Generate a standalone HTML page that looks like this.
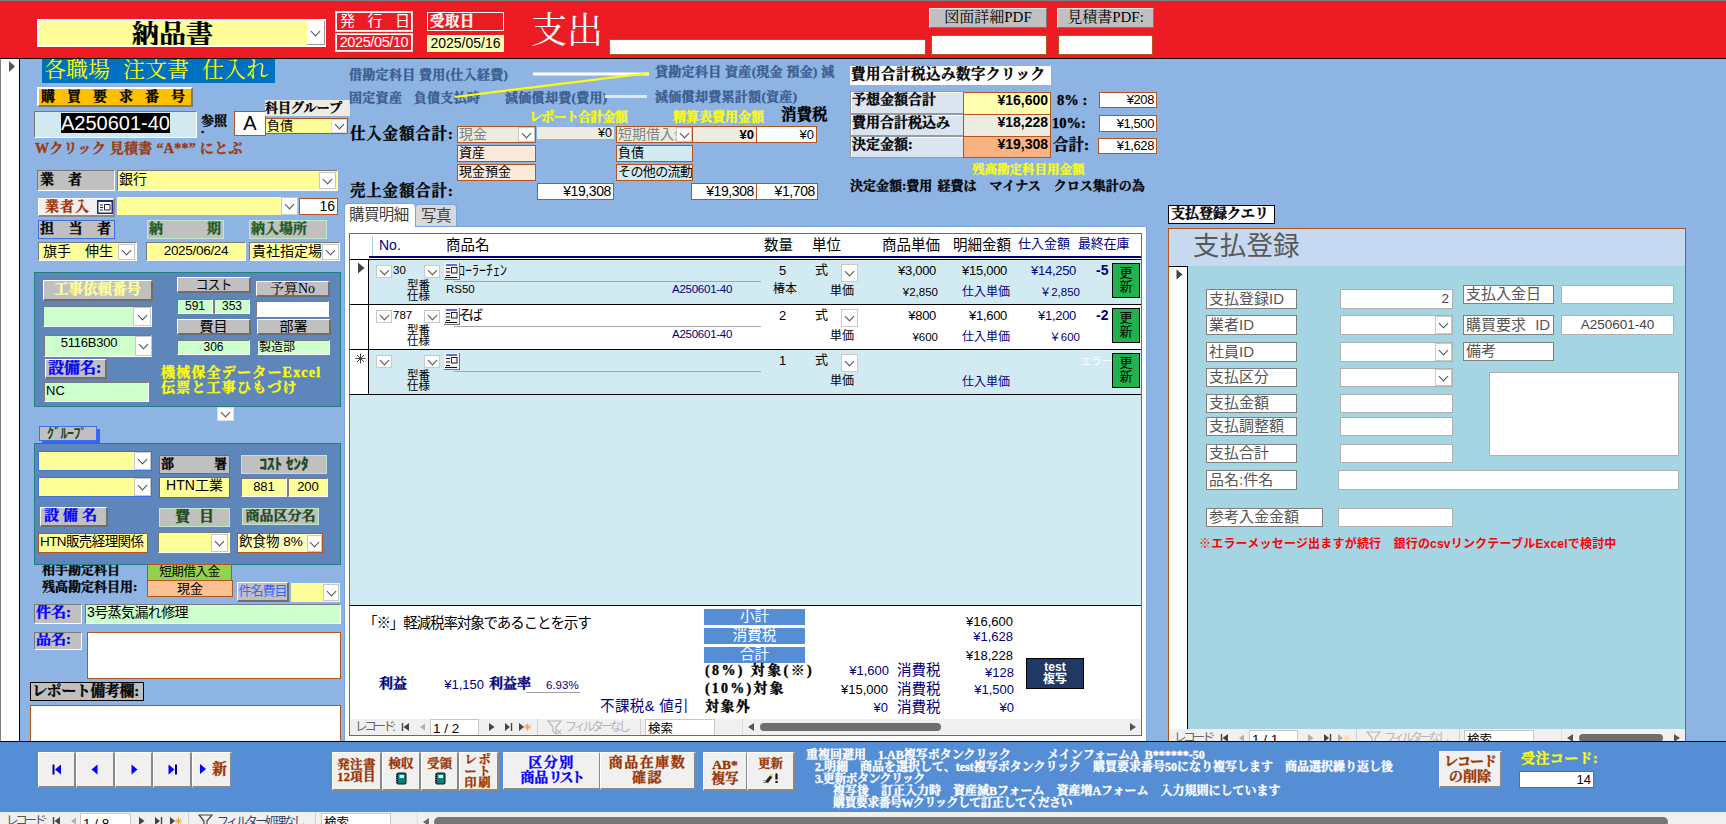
<!DOCTYPE html>
<html lang="ja">
<head>
<meta charset="utf-8">
<title>納品書 支出</title>
<style>
*{margin:0;padding:0;box-sizing:border-box}
html,body{width:1726px;height:824px;overflow:hidden;background:#8eb4e3}
body{position:relative;font-family:"Liberation Sans","Noto Sans CJK JP",sans-serif;font-size:14px;color:#000}
.a{position:absolute;white-space:nowrap;overflow:hidden}
.v{position:absolute;white-space:nowrap;overflow:visible}
.g{font-family:"Liberation Sans","Noto Sans CJK JP",sans-serif}
.m{font-family:"Liberation Serif","Noto Serif CJK SC",serif;font-weight:bold;-webkit-text-stroke:.35px}
.ms{font-family:"Liberation Serif","Noto Serif CJK SC",serif}
.r{text-align:right}
.c{text-align:center}
.b{font-weight:bold}
.br{border:1px solid #b4551e}
.sunk{border:1px solid #9a9a9a;box-shadow:inset 1px 1px 0 #fff}
.sunk2{border-top:1px solid #7a7a7a;border-left:1px solid #7a7a7a;border-bottom:1px solid #fff;border-right:1px solid #fff}
.rais{border-top:1px solid #fff;border-left:1px solid #fff;border-bottom:2px solid #6e6e6e;border-right:2px solid #6e6e6e}
.btn{background:#f0f0f0;border-top:1px solid #fff;border-left:1px solid #fff;border-bottom:2px solid #8a8a8a;border-right:2px solid #8a8a8a}
.gy{background:#c0c0c0}
.ye{background:#ffff99}
.gr{background:#ccffcc}
.wh{background:#fff}
.dd{position:absolute;background:#fff;border:1px solid #c8c8c8}
.dd:after{content:"";position:absolute;left:50%;top:50%;width:6px;height:6px;margin-left:-3.5px;margin-top:-5px;border-right:1px solid #505050;border-bottom:1px solid #505050;transform:rotate(45deg)}
.navy{color:#00007f}
.lb{color:#3a5c90}
</style>
</head>
<body>
<!-- backgrounds -->
<div class="a" style="left:0;top:0;width:1726px;height:59px;background:#ed1c24;border-top:1px solid #7f7f7f;border-bottom:1px solid #000"></div>
<div class="a" style="left:0;top:59px;width:20px;height:682px;background:#fff;border-right:1px solid #000;border-left:1px solid #808080"></div>
<svg class="a" style="left:8px;top:60px" width="8" height="13"><path d="M1 1 L7 6.5 L1 12 Z" fill="#555"/></svg>

<!-- HEADER -->
<div id="hdr">
<div class="a ye m c" style="left:37px;top:19px;width:289px;height:28px;border:2px solid #fff;font-size:27px;line-height:29px;padding-right:18px">納品書</div>
<div class="dd" style="left:307px;top:21px;width:18px;height:24px;border:0;border-right:1px solid #9a9a9a;border-bottom:1px solid #9a9a9a"></div>
<div class="a g" style="left:335px;top:11px;width:78px;height:21px;border:1px solid #cde4e4;box-shadow:inset 0 0 0 1px #fff;color:#fff;font-size:15px;line-height:18px;padding-left:4px;letter-spacing:12.500px">発行日</div>
<div class="a g c" style="left:335px;top:33px;width:78px;height:19px;border:1px solid #cde4e4;box-shadow:inset 0 0 0 1px #fff;color:#fff;font-size:14.500px;line-height:16px;letter-spacing:-.4px">2025/05/10</div>
<div class="a m" style="left:427px;top:12px;width:77px;height:19px;border:1px solid #fff;color:#fff;font-size:14.500px;line-height:16px;padding-left:2px;letter-spacing:.4px">受取日</div>
<div class="a g c" style="left:427px;top:35px;width:77px;height:17px;background:#ffffb4;border:1px solid #fff;font-size:14px;line-height:15px">2025/05/16</div>
<div class="v ms" style="left:531px;top:8px;font-size:36px;line-height:46px;color:#fff;font-weight:normal">支出</div>
<div class="a wh" style="left:609px;top:39px;width:317px;height:16px;border:1px solid #b4551e"></div>
<div class="a gy ms c" style="left:929px;top:8px;width:118px;height:20px;border:1px solid #e8e8e8;border-bottom-color:#777;border-right-color:#777;font-size:15px;line-height:17px;font-weight:normal">図面詳細PDF</div>
<div class="a wh" style="left:931px;top:35px;width:116px;height:20px;border:1px solid #b4551e"></div>
<div class="a gy ms c" style="left:1057px;top:8px;width:97px;height:20px;border:1px solid #e8e8e8;border-bottom-color:#777;border-right-color:#777;font-size:15px;line-height:17px;font-weight:normal">見積書PDF:</div>
<div class="a wh" style="left:1058px;top:35px;width:95px;height:20px;border:1px solid #b4551e"></div>
</div>

<!--LEFT-->
<div id="left">
<div class="a ms" style="left:42px;top:59px;width:233px;height:24px;background:#0070c0;color:#ffff00;font-size:22px;line-height:22px;padding-left:2px;font-weight:normal;word-spacing:7.5px">各職場 注文書 仕入れ</div>
<div class="a m" style="left:37px;top:87px;width:156px;height:20px;background:#ffc000;border-top:2px solid #fff;border-left:2px solid #fff;border-bottom:2px solid #7a7a7a;border-right:2px solid #7a7a7a;font-size:14px;line-height:15px;letter-spacing:12px;padding-left:2px">購買要求番号</div>
<div class="a sunk2" style="left:34px;top:111px;width:163px;height:27px;background:#d2e9f0"></div>
<div class="a g" style="left:61px;top:113px;width:109px;height:20px;background:#000;color:#fff;font-size:20px;line-height:21px;letter-spacing:0">A250601-40</div>
<div class="v m" style="left:201px;top:112px;font-size:13px;line-height:17px">参照<br><span style="position:relative;top:-9px">.</span></div>
<div class="a wh br g c" style="left:234px;top:111px;width:32px;height:25px;font-size:20px;line-height:22px">A</div>
<div class="a m" style="left:265px;top:100px;width:85px;height:16px;background:#eeece1;font-size:13px;line-height:15px">科目グループ</div>
<div class="a ye br g" style="left:265px;top:118px;width:83px;height:16px;font-size:13px;line-height:14px;padding-left:1px">負債</div>
<div class="dd" style="left:331px;top:119px;width:16px;height:14px;border-color:#ddd"></div>
<div class="v m" style="left:35px;top:140px;font-size:14px;line-height:18px;color:#9c3a10;letter-spacing:.3px">Wクリック 見積書 “A**” にとぶ</div>

<div class="a gy sunk2 m" style="left:37px;top:170px;width:78px;height:21px;font-size:14px;line-height:17px;padding-left:2px;letter-spacing:14px">業者</div>
<div class="a ye sunk2 g" style="left:117px;top:170px;width:221px;height:21px;font-size:14px;line-height:17px;padding-left:1px">銀行</div>
<div class="dd" style="left:319px;top:172px;width:17px;height:17px"></div>
<div class="a btn m" style="left:38px;top:198px;width:77px;height:19px;font-size:14px;line-height:16px;color:#a0300a;padding-left:6px;letter-spacing:1px">業者入</div>
<svg class="a" style="left:97px;top:200px" width="16" height="14"><rect x="0" y="0" width="16" height="14" fill="#1f2f6f"/><rect x="1.5" y="2" width="13" height="10.5" fill="#fff"/><path d="M3 5h3M3 7.5h3M3 10h3M7.5 4.5h5.5v5.5h-5.5z" stroke="#222" fill="none" stroke-width="1"/></svg>
<div class="a ye" style="left:117px;top:197px;width:181px;height:18px"></div>
<div class="dd" style="left:281px;top:197px;width:17px;height:18px"></div>
<div class="a wh br g r" style="left:299px;top:198px;width:39px;height:17px;font-size:14px;line-height:15px;padding-right:2px">16</div>
<div class="a gy m" style="left:38px;top:220px;width:77px;height:19px;border:1px solid #3f6fe0;font-size:14px;line-height:16px;padding-left:1px;letter-spacing:14.5px">担当者</div>
<div class="a gy m" style="left:147px;top:220px;width:77px;height:19px;border:1px solid #bfe8c8;font-size:14px;line-height:16px;padding-left:1px;color:#1a5a1a;letter-spacing:44px">納期</div>
<div class="a gy m" style="left:249px;top:220px;width:78px;height:19px;border:1px solid #bfe8c8;font-size:14px;line-height:16px;padding-left:1px;color:#1a5a1a">納入場所</div>
<div class="a ye sunk2 g" style="left:38px;top:242px;width:99px;height:19px;font-size:14px;line-height:16px;padding-left:4px">旗手　伸生</div>
<div class="dd" style="left:118px;top:244px;width:17px;height:16px"></div>
<div class="a ye sunk2 g c" style="left:146px;top:242px;width:100px;height:19px;font-size:13.5px;line-height:16px;letter-spacing:-.3px">2025/06/24</div>
<div class="a ye sunk2 g" style="left:249px;top:242px;width:91px;height:19px;font-size:14px;line-height:16px;padding-left:2px">貴社指定場所</div>
<div class="dd" style="left:322px;top:244px;width:17px;height:16px"></div>

<!-- panel 1 -->
<div class="a" style="left:34px;top:272px;width:307px;height:135px;background:#5f86ba;border:1px solid #1f8080"></div>
<div class="a gy rais m c" style="left:43px;top:280px;width:110px;height:21px;font-size:14.5px;line-height:16px;color:#ffff99;letter-spacing:0">工事依頼番号</div>
<div class="a gr sunk2" style="left:43px;top:306px;width:109px;height:21px"></div>
<div class="dd" style="left:133px;top:307px;width:18px;height:19px"></div>
<div class="a gr sunk2 g c" style="left:44px;top:335px;width:108px;height:22px;font-size:13px;line-height:13px;padding-right:18px;letter-spacing:-.2px">5116B300</div>
<div class="dd" style="left:135px;top:336px;width:17px;height:20px"></div>
<div class="a gy rais g c" style="left:177px;top:277px;width:74px;height:16px;font-size:13px;line-height:13px;letter-spacing:-1px">コスト</div>
<div class="a gr sunk2 g c" style="left:177px;top:299px;width:36px;height:15px;font-size:12px;line-height:13px">591</div>
<div class="a gr sunk2 g c" style="left:214px;top:299px;width:36px;height:15px;font-size:12px;line-height:13px">353</div>
<div class="a gy rais ms c" style="left:256px;top:281px;width:74px;height:16px;font-size:14px;line-height:14px">予算No</div>
<div class="a wh sunk2" style="left:256px;top:301px;width:73px;height:16px"></div>
<div class="a gy rais g c" style="left:177px;top:319px;width:74px;height:16px;font-size:14px;line-height:13px">費目</div>
<div class="a gy rais g c" style="left:257px;top:319px;width:74px;height:16px;font-size:14px;line-height:13px">部署</div>
<div class="a gr sunk2 g c" style="left:177px;top:340px;width:73px;height:15px;font-size:12px;line-height:13px">306</div>
<div class="a gr sunk2 g" style="left:257px;top:340px;width:73px;height:15px;font-size:12px;line-height:12px;padding-left:1px">製造部</div>
<div class="a gy rais m" style="left:45px;top:359px;width:62px;height:20px;font-size:16px;line-height:15px;color:#0000ff;padding-left:2px">設備名:</div>
<div class="a gr sunk2 g" style="left:44px;top:382px;width:105px;height:20px;font-size:13px;line-height:16px;padding-left:1px">NC</div>
<div class="v m" style="left:161px;top:366px;font-size:14px;line-height:14.5px;color:#ffff00;letter-spacing:1.2px">機械保全データーExcel<br>伝票と工事ひもづけ</div>
<div class="dd" style="left:217px;top:407px;width:17px;height:14px;border-color:#ddd"></div>

<!-- group -->
<div class="a" style="left:42px;top:429px;width:58px;height:15px;background:#3366ff"></div>
<div class="a gy g b" style="left:39px;top:426px;width:58px;height:15px;border:1px solid #3f6fe0;font-size:14px;line-height:12px;color:#1a4a1a;padding-left:7px;letter-spacing:-.5px">ｸﾞﾙｰﾌﾟ</div>
<div class="a" style="left:34px;top:443px;width:307px;height:122px;background:#5f86ba;border:1px solid #1f8080"></div>
<div class="a ye" style="left:38px;top:451px;width:114px;height:20px;border:1px solid #3f6fe0"></div>
<div class="dd" style="left:134px;top:452px;width:17px;height:18px"></div>
<div class="a ye" style="left:38px;top:477px;width:114px;height:20px;border:1px solid #3f6fe0"></div>
<div class="dd" style="left:134px;top:478px;width:17px;height:18px"></div>
<div class="a gy m" style="left:159px;top:455px;width:71px;height:19px;border:1px solid #3f6fe0;font-size:13px;line-height:15px;padding-left:1px;letter-spacing:40px">部署</div>
<div class="a ye br g c" style="left:159px;top:477px;width:71px;height:21px;font-size:14px;line-height:15px">HTN工業</div>
<div class="a gy m c" style="left:241px;top:455px;width:86px;height:19px;border:1px solid #bfe8c8;font-size:15px;line-height:16px;color:#1a4a1a;font-family:'Liberation Sans','Noto Sans CJK JP',sans-serif">ｺｽﾄ ｾﾝﾀ</div>
<div class="a ye sunk2 g c" style="left:241px;top:478px;width:46px;height:19px;font-size:13px;line-height:15px">881</div>
<div class="a ye sunk2 g c" style="left:288px;top:478px;width:40px;height:19px;font-size:13px;line-height:15px">200</div>
<div class="a gy rais m" style="left:40px;top:507px;width:68px;height:20px;font-size:15px;line-height:15px;color:#0000ff;padding-left:3px;letter-spacing:4px">設備名</div>
<div class="a gy m c" style="left:159px;top:508px;width:71px;height:19px;border:1px solid #bfe8c8;font-size:15px;line-height:14px;color:#1a4a1a;letter-spacing:9px;padding-left:9px">費目</div>
<div class="a gy m c" style="left:242px;top:508px;width:77px;height:17px;border:1px solid #bfe8c8;font-size:14px;line-height:13px;color:#1a4a1a">商品区分名</div>
<div class="a ye br g" style="left:38px;top:533px;width:110px;height:20px;font-size:13.5px;line-height:15px;padding-left:1px;letter-spacing:-.6px">HTN販売経理関係</div>
<div class="a ye sunk2" style="left:158px;top:532px;width:72px;height:21px"></div>
<div class="dd" style="left:211px;top:534px;width:17px;height:18px"></div>
<div class="a br g" style="left:237px;top:533px;width:86px;height:20px;background:#ffffc0;font-size:13.5px;line-height:15px;padding-left:1px">飲食物 8%</div>
<div class="dd" style="left:307px;top:535px;width:15px;height:17px"></div>

<div class="v m" style="left:42px;top:561px;font-size:13px;line-height:17px">相手勘定科目<br>残高勘定科目用:</div>
<div class="a" style="left:34px;top:560px;width:113px;height:5px;background:#5f86ba;border-bottom:1px solid #1f8080;border-left:1px solid #1f8080"></div>
<div class="a br g c" style="left:147px;top:564px;width:85px;height:17px;background:#92d050;font-size:12.5px;line-height:15px;letter-spacing:-.4px">短期借入金</div>
<div class="a br g c" style="left:147px;top:580px;width:86px;height:17px;background:#fac090;font-size:13px;line-height:15px">現金</div>
<div class="a gy rais g c" style="left:237px;top:582px;width:52px;height:20px;font-size:13px;line-height:16px;color:#3366ff;letter-spacing:-1px">件名費目</div>
<div class="a ye" style="left:291px;top:583px;width:49px;height:19px"></div>
<div class="dd" style="left:323px;top:584px;width:16px;height:17px"></div>
<div class="a gy sunk2 m" style="left:34px;top:604px;width:48px;height:20px;font-size:15px;line-height:15px;color:#0000ff;padding-left:1px">件名:</div>
<div class="a gr sunk2 g" style="left:85px;top:604px;width:256px;height:20px;font-size:14px;line-height:15px;padding-left:1px;letter-spacing:-.6px">3号蒸気漏れ修理</div>
<div class="a gy sunk2 m" style="left:34px;top:632px;width:48px;height:18px;font-size:15px;line-height:13px;color:#0000ff;padding-left:1px">品名:</div>
<div class="a wh br" style="left:87px;top:632px;width:254px;height:47px"></div>
<div class="a gy m" style="left:30px;top:682px;width:114px;height:19px;border:1px solid #000;font-size:15px;line-height:16px;padding-left:1px;letter-spacing:-.4px">レポート備考欄:</div>
<div class="a wh br" style="left:30px;top:705px;width:311px;height:40px"></div>
</div>

<!--MID-->
<div id="mid">
<div class="v m lb" style="left:349px;top:66px;font-size:13px;line-height:17px;letter-spacing:.3px">借勘定科目 費用(仕入経費)</div>
<div class="v m lb" style="left:349px;top:89px;font-size:13px;line-height:17px;letter-spacing:.3px;word-spacing:8px">固定資産 負債支払時</div>
<div class="v m lb" style="left:505px;top:89px;font-size:13px;line-height:17px;letter-spacing:.3px">減価償却費(費用)</div>
<div class="v m lb" style="left:655px;top:63px;font-size:13px;line-height:17px;letter-spacing:.3px">貸勘定科目 資産(現金 預金) 減</div>
<div class="v m lb" style="left:655px;top:88px;font-size:13px;line-height:17px;letter-spacing:.3px">減価償却費累計額(資産)</div>
<svg class="a" style="left:440px;top:65px" width="220" height="40"><line x1="93" y1="9" x2="209" y2="9" stroke="#fff" stroke-width="3"/><line x1="165" y1="31.5" x2="207" y2="31.5" stroke="#dbe9f3" stroke-width="3"/><line x1="209" y1="8" x2="15" y2="32" stroke="#ffff00" stroke-width="2.2"/></svg>
<div class="v m" style="left:529px;top:109px;font-size:13px;line-height:16px;color:#ffff00;letter-spacing:-.75px">レポート合計金額</div>
<div class="v m" style="left:673px;top:109px;font-size:13px;line-height:16px;color:#ffff00">精算表費用金額</div>
<div class="v m" style="left:781px;top:105px;font-size:15.5px;line-height:20px">消費税</div>
<div class="v m" style="left:350px;top:124px;font-size:15.5px;line-height:20px;letter-spacing:.8px">仕入金額合計:</div>
<div class="v m" style="left:350px;top:181px;font-size:15.5px;line-height:20px;letter-spacing:.8px">売上金額合計:</div>
<div class="a br g" style="left:457px;top:126px;width:79px;height:17px;background:#eeece1;color:#808080;font-size:14px;line-height:14px;padding-left:1px">現金</div>
<div class="dd" style="left:518px;top:127px;width:17px;height:15px"></div>
<div class="a g r" style="left:537px;top:127px;width:77px;height:12px;background:#eeece1;font-size:12.5px;line-height:12px;padding-right:2px">¥0</div>
<div class="a br g" style="left:616px;top:126px;width:77px;height:17px;background:#eeece1;color:#808080;font-size:14px;line-height:14px;padding-left:1px">短期借入金</div>
<div class="dd" style="left:676px;top:127px;width:16px;height:15px"></div>
<div class="a br g r b" style="left:692px;top:126px;width:65px;height:17px;background:#eeece1;font-size:13px;line-height:15px;padding-right:2px">¥0</div>
<div class="a br g r wh" style="left:756px;top:126px;width:61px;height:17px;font-size:13px;line-height:15px;padding-right:2px">¥0</div>
<div class="a br g" style="left:457px;top:145px;width:79px;height:17px;background:#fde9d9;font-size:13px;line-height:14px;padding-left:1px">資産</div>
<div class="a br g" style="left:457px;top:164px;width:79px;height:17px;background:#fde9d9;font-size:13px;line-height:14px;padding-left:1px">現金預金</div>
<div class="a br g" style="left:616px;top:145px;width:77px;height:17px;background:#d2eaf1;font-size:13px;line-height:14px;padding-left:1px">負債</div>
<div class="a br g" style="left:616px;top:164px;width:77px;height:17px;background:#d2eaf1;font-size:13px;line-height:14px;padding-left:1px;letter-spacing:-.6px">その他の流動</div>
<div class="a br g r wh" style="left:537px;top:183px;width:77px;height:17px;font-size:14px;line-height:15px;padding-right:2px;letter-spacing:-.4px">¥19,308</div>
<div class="a br g r wh" style="left:691px;top:183px;width:66px;height:17px;font-size:14px;line-height:15px;padding-right:2px;letter-spacing:-.4px">¥19,308</div>
<div class="a br g r wh" style="left:756px;top:183px;width:62px;height:17px;font-size:14px;line-height:15px;padding-right:2px;letter-spacing:-.4px">¥1,708</div>

<div class="a wh m" style="left:850px;top:66px;width:201px;height:19px;font-size:14.5px;line-height:17px;padding-left:1px;letter-spacing:.5px">費用合計税込み数字クリック</div>
<div class="a sunk m" style="left:850px;top:91px;width:114px;height:23px;background:#dbe5f1;font-size:14px;line-height:15px;padding-left:1px">予想金額合計</div>
<div class="a sunk m" style="left:850px;top:114px;width:114px;height:22px;background:#dbe5f1;font-size:14px;line-height:15px;padding-left:1px">費用合計税込み</div>
<div class="a sunk m" style="left:850px;top:136px;width:114px;height:22px;background:#dbe5f1;font-size:14px;line-height:15px;padding-left:1px">決定金額:</div>
<div class="a br g r b" style="left:963px;top:92px;width:88px;height:23px;background:#ffffb0;font-size:14px;line-height:15px;padding-right:2px">¥16,600</div>
<div class="a br g r b" style="left:963px;top:114px;width:88px;height:23px;background:#eeece1;font-size:14px;line-height:15px;padding-right:2px">¥18,228</div>
<div class="a br g r b" style="left:963px;top:136px;width:88px;height:22px;background:#fab380;font-size:14px;line-height:15px;padding-right:2px">¥19,308</div>
<div class="v m" style="left:1057px;top:91px;font-size:14.5px;line-height:18px">8% :</div>
<div class="v m" style="left:1052px;top:114px;font-size:14.5px;line-height:18px">10%:</div>
<div class="v m" style="left:1053px;top:135px;font-size:15.5px;line-height:20px">合計:</div>
<div class="a br g r wh" style="left:1099px;top:92px;width:58px;height:16px;font-size:13px;line-height:14px;padding-right:2px;letter-spacing:-.4px">¥208</div>
<div class="a br g r wh" style="left:1099px;top:115px;width:58px;height:17px;font-size:13px;line-height:15px;padding-right:2px;letter-spacing:-.4px">¥1,500</div>
<div class="a br g r wh" style="left:1098px;top:138px;width:59px;height:16px;font-size:13px;line-height:14px;padding-right:2px;letter-spacing:-.4px">¥1,628</div>
<div class="v m" style="left:972px;top:162px;font-size:12.5px;line-height:16px;color:#ffff00">残高勘定科目用金額</div>
<div class="v m" style="left:850px;top:177px;font-size:13px;line-height:18px;word-spacing:2px">決定金額:費用 経費は　マイナス　クロス集計の為</div>
</div>

<!--SUB-->
<div id="sub">
<div class="a" style="left:344px;top:226px;width:803px;height:516px;background:#fff;border:1px solid #78a3df"></div>
<div class="a g" style="left:344px;top:203px;width:72px;height:24px;background:#fff;border:1px solid #78a3df;border-bottom:0;border-radius:4px 4px 0 0;font-size:15.5px;line-height:22px;color:#404040;padding-left:4px;letter-spacing:-.6px">購買明細</div>
<div class="a g" style="left:415px;top:204px;width:42px;height:22px;background:#d9d9d9;border:1px solid #78a3df;border-bottom:0;border-radius:4px 4px 0 0;font-size:15.5px;line-height:21px;color:#404040;padding-left:5px;letter-spacing:-.6px">写真</div>
<div class="a" style="left:349px;top:233px;width:793px;height:503px;background:#d2eaf1;border:1px solid #b4551e"></div>
<div class="a wh" style="left:350px;top:234px;width:791px;height:25px"></div>
<div class="a" style="left:372px;top:236px;width:1px;height:21px;background:#b9cde5"></div>
<div class="a" style="left:369px;top:256px;width:772px;height:2px;background:#00007f"></div>
<div class="a" style="left:350px;top:259px;width:791px;height:1px;background:#000"></div>
<div class="a wh" style="left:350px;top:260px;width:18px;height:134px"></div>
<div class="a" style="left:368px;top:259px;width:1px;height:136px;background:#000"></div>
<div class="v g navy" style="left:379px;top:237px;font-size:14px;line-height:17px">No.</div>
<div class="v g" style="left:446px;top:236px;font-size:14.5px;line-height:18px">商品名</div>
<div class="v g" style="left:764px;top:236px;font-size:14.5px;line-height:18px">数量</div>
<div class="v g" style="left:812px;top:236px;font-size:14.5px;line-height:18px">単位</div>
<div class="v g" style="left:882px;top:236px;font-size:14.5px;line-height:18px">商品単価</div>
<div class="v g" style="left:953px;top:236px;font-size:14.5px;line-height:18px">明細金額</div>
<div class="v g navy" style="left:1018px;top:235px;font-size:13px;line-height:17px">仕入金額</div>
<div class="v g navy" style="left:1078px;top:235px;font-size:13px;line-height:17px;letter-spacing:-.2px">最終在庫</div>
<svg class="a" style="left:357px;top:262px" width="9" height="12"><path d="M1 0.5 L7.5 6 L1 11.5 Z" fill="#444"/></svg>
<svg class="a" style="left:355px;top:353px" width="11" height="11"><path d="M5.5 0.5v10M0.5 5.5h10M2 2l7 7M9 2l-7 7" stroke="#444" stroke-width="1" fill="none"/></svg>
<div class="a" style="left:369px;top:260px;width:772px;height:44px;background:#d2eaf1"></div>
<div class="a" style="left:350px;top:304px;width:791px;height:1px;background:#000"></div>
<div class="dd" style="left:376px;top:265px;width:16px;height:13px"></div>
<div class="v g" style="left:393px;top:263px;font-size:11.5px;line-height:14px">30</div>
<div class="dd" style="left:424px;top:265px;width:16px;height:13px"></div>
<div class="v g" style="left:458px;top:262px;font-size:14px;line-height:16px;letter-spacing:0">ﾛｰﾗｰﾁｪﾝ</div>
<svg class="a" style="left:444px;top:263px" width="16" height="17"><rect x="0" y="0" width="16" height="17" fill="#f4f4f4"/><path d="M0 16.5h16M15.5 0v17" stroke="#777" stroke-width="1"/><path d="M2 2h11" stroke="#1010c0" stroke-width="1.2"/><path d="M2 5.5h4M2 9h4M2 12.5h4M1 14.5h12" stroke="#111" stroke-width="1.2" fill="none"/><rect x="7.5" y="4.5" width="5.5" height="5.5" fill="none" stroke="#223" stroke-width="1"/></svg>
<div class="a" style="left:454px;top:281px;width:307px;height:1px;background:#a6a6a6"></div>
<div class="v g" style="left:407px;top:280px;font-size:11.5px;line-height:10.5px">型番<br>仕様</div>
<div class="v g" style="left:446px;top:282px;font-size:11.5px;line-height:14px">RS50</div>
<div class="v g navy" style="left:672px;top:282px;font-size:11.5px;line-height:14px;letter-spacing:-.25px">A250601-40</div>
<div class="v g c" style="left:772px;top:263px;width:21px;font-size:13px;line-height:16px">5</div>
<div class="v g" style="left:773px;top:282px;font-size:12px;line-height:14px">椿本</div>
<div class="v g" style="left:815px;top:262px;font-size:13px;line-height:16px">式</div>
<div class="dd" style="left:841px;top:264px;width:17px;height:18px"></div>
<div class="v g" style="left:830px;top:284px;font-size:12px;line-height:14px">単価</div>
<div class="v g r" style="left:876px;top:263px;width:60px;font-size:13px;line-height:16px;letter-spacing:-.3px">¥3,000</div>
<div class="v g r" style="left:878px;top:285px;width:60px;font-size:11.5px;line-height:14px">¥2,850</div>
<div class="v g r" style="left:947px;top:263px;width:60px;font-size:13px;line-height:16px;letter-spacing:-.3px">¥15,000</div>
<div class="v g navy" style="left:962px;top:285px;font-size:12px;line-height:14px">仕入単価</div>
<div class="v g r navy" style="left:1016px;top:263px;width:60px;font-size:13px;line-height:16px;letter-spacing:-.3px">¥14,250</div>
<div class="v g r navy" style="left:1020px;top:285px;width:60px;font-size:11.5px;line-height:14px">￥2,850</div>
<div class="v g b navy" style="left:1096px;top:262px;font-size:14px;line-height:16px">-5</div>
<div class="a g c" style="left:1112px;top:263px;width:28px;height:35px;background:#22b14c;border:1px solid #000;font-size:13px;line-height:14px;padding-top:2px">更<br>新</div>
<div class="a" style="left:369px;top:305px;width:772px;height:44px;background:#ffffff"></div>
<div class="a" style="left:350px;top:349px;width:791px;height:1px;background:#000"></div>
<div class="dd" style="left:376px;top:310px;width:16px;height:13px"></div>
<div class="v g" style="left:393px;top:308px;font-size:11.5px;line-height:14px">787</div>
<div class="dd" style="left:424px;top:310px;width:16px;height:13px"></div>
<div class="v g" style="left:458px;top:307px;font-size:14px;line-height:16px;letter-spacing:-3px">そば</div>
<svg class="a" style="left:444px;top:308px" width="16" height="17"><rect x="0" y="0" width="16" height="17" fill="#f4f4f4"/><path d="M0 16.5h16M15.5 0v17" stroke="#777" stroke-width="1"/><path d="M2 2h11" stroke="#1010c0" stroke-width="1.2"/><path d="M2 5.5h4M2 9h4M2 12.5h4M1 14.5h12" stroke="#111" stroke-width="1.2" fill="none"/><rect x="7.5" y="4.5" width="5.5" height="5.5" fill="none" stroke="#223" stroke-width="1"/></svg>
<div class="a" style="left:454px;top:326px;width:307px;height:1px;background:#a6a6a6"></div>
<div class="v g" style="left:407px;top:325px;font-size:11.5px;line-height:10.5px">型番<br>仕様</div>
<div class="v g navy" style="left:672px;top:327px;font-size:11.5px;line-height:14px;letter-spacing:-.25px">A250601-40</div>
<div class="v g c" style="left:772px;top:308px;width:21px;font-size:13px;line-height:16px">2</div>
<div class="v g" style="left:815px;top:307px;font-size:13px;line-height:16px">式</div>
<div class="dd" style="left:841px;top:309px;width:17px;height:18px"></div>
<div class="v g" style="left:830px;top:329px;font-size:12px;line-height:14px">単価</div>
<div class="v g r" style="left:876px;top:308px;width:60px;font-size:13px;line-height:16px;letter-spacing:-.3px">¥800</div>
<div class="v g r" style="left:878px;top:330px;width:60px;font-size:11.5px;line-height:14px">¥600</div>
<div class="v g r" style="left:947px;top:308px;width:60px;font-size:13px;line-height:16px;letter-spacing:-.3px">¥1,600</div>
<div class="v g navy" style="left:962px;top:330px;font-size:12px;line-height:14px">仕入単価</div>
<div class="v g r navy" style="left:1016px;top:308px;width:60px;font-size:13px;line-height:16px;letter-spacing:-.3px">¥1,200</div>
<div class="v g r navy" style="left:1020px;top:330px;width:60px;font-size:11.5px;line-height:14px">￥600</div>
<div class="v g b navy" style="left:1096px;top:307px;font-size:14px;line-height:16px">-2</div>
<div class="a g c" style="left:1112px;top:308px;width:28px;height:35px;background:#22b14c;border:1px solid #000;font-size:13px;line-height:14px;padding-top:2px">更<br>新</div>
<div class="a" style="left:369px;top:350px;width:772px;height:44px;background:#d2eaf1"></div>
<div class="a" style="left:350px;top:394px;width:791px;height:1px;background:#000"></div>
<div class="dd" style="left:376px;top:355px;width:16px;height:13px"></div>
<div class="dd" style="left:424px;top:355px;width:16px;height:13px"></div>
<div class="v g" style="left:458px;top:352px;font-size:14px;line-height:16px;letter-spacing:-.5px"></div>
<svg class="a" style="left:444px;top:353px" width="16" height="17"><rect x="0" y="0" width="16" height="17" fill="#f4f4f4"/><path d="M0 16.5h16M15.5 0v17" stroke="#777" stroke-width="1"/><path d="M2 2h11" stroke="#1010c0" stroke-width="1.2"/><path d="M2 5.5h4M2 9h4M2 12.5h4M1 14.5h12" stroke="#111" stroke-width="1.2" fill="none"/><rect x="7.5" y="4.5" width="5.5" height="5.5" fill="none" stroke="#223" stroke-width="1"/></svg>
<div class="a" style="left:454px;top:371px;width:307px;height:1px;background:#a6a6a6"></div>
<div class="v g" style="left:407px;top:370px;font-size:11.5px;line-height:10.5px">型番<br>仕様</div>
<div class="v g c" style="left:772px;top:353px;width:21px;font-size:13px;line-height:16px">1</div>
<div class="v g" style="left:815px;top:352px;font-size:13px;line-height:16px">式</div>
<div class="dd" style="left:841px;top:354px;width:17px;height:18px"></div>
<div class="v g" style="left:830px;top:374px;font-size:12px;line-height:14px">単価</div>
<div class="v g navy" style="left:962px;top:375px;font-size:12px;line-height:14px">仕入単価</div>
<div class="v g" style="left:1081px;top:355px;font-size:10.5px;line-height:12px;color:#fff">エラー</div>
<div class="a g c" style="left:1112px;top:353px;width:28px;height:35px;background:#22b14c;border:1px solid #000;font-size:13px;line-height:14px;padding-top:2px">更<br>新</div>
<!--SUBFOOT-->
<div class="a wh" style="left:350px;top:605px;width:791px;height:130px;border-top:1px solid #000"></div>
<div class="v g" style="left:363px;top:614px;font-size:14.5px;line-height:19px;letter-spacing:-1.1px">「※」軽減税率対象であることを示す</div>
<div class="a g c" style="left:704px;top:609px;width:101px;height:16px;background:#558ed5;color:#fff;font-size:14.5px;line-height:14px">小計</div>
<div class="a g c" style="left:704px;top:628px;width:101px;height:16px;background:#558ed5;color:#fff;font-size:14.5px;line-height:14px">消費税</div>
<div class="a g c" style="left:704px;top:647px;width:101px;height:16px;background:#558ed5;color:#fff;font-size:14.5px;line-height:14px">合計</div>
<div class="v g r" style="left:933px;top:614px;width:80px;font-size:13px;line-height:16px">¥16,600</div>
<div class="v g r navy" style="left:933px;top:629px;width:80px;font-size:13px;line-height:16px">¥1,628</div>
<div class="v g r" style="left:933px;top:648px;width:80px;font-size:13px;line-height:16px">¥18,228</div>
<div class="v m" style="left:705px;top:662px;font-size:14px;line-height:18px;letter-spacing:2.4px">(8%) 対象(※)</div>
<div class="v m" style="left:705px;top:680px;font-size:14px;line-height:18px;letter-spacing:2.2px">(10%)対象</div>
<div class="v m" style="left:705px;top:698px;font-size:14px;line-height:18px;letter-spacing:1.5px">対象外</div>
<div class="v g r navy" style="left:809px;top:663px;width:80px;font-size:13px;line-height:16px">¥1,600</div>
<div class="v g r" style="left:808px;top:682px;width:80px;font-size:13px;line-height:16px">¥15,000</div>
<div class="v g r navy" style="left:808px;top:700px;width:80px;font-size:13px;line-height:16px">¥0</div>
<div class="v g navy" style="left:897px;top:661px;font-size:14.5px;line-height:18px">消費税</div>
<div class="v g navy" style="left:897px;top:680px;font-size:14.5px;line-height:18px">消費税</div>
<div class="v g navy" style="left:897px;top:698px;font-size:14.5px;line-height:18px">消費税</div>
<div class="v g r navy" style="left:934px;top:665px;width:80px;font-size:13px;line-height:16px">¥128</div>
<div class="v g r navy" style="left:934px;top:682px;width:80px;font-size:13px;line-height:16px">¥1,500</div>
<div class="v g r navy" style="left:934px;top:700px;width:80px;font-size:13px;line-height:16px">¥0</div>
<div class="a g c b" style="left:1026px;top:658px;width:58px;height:31px;background:#1f3864;border:1px solid #000;color:#fff;font-size:12px;line-height:12px;padding-top:2px">test<br>複写</div>
<div class="v m navy" style="left:379px;top:675px;font-size:14px;line-height:18px">利益</div>
<div class="v g r navy" style="left:424px;top:677px;width:60px;font-size:13px;line-height:16px">¥1,150</div>
<div class="v m navy" style="left:489px;top:675px;font-size:14px;line-height:18px">利益率</div>
<div class="v g navy" style="left:546px;top:678px;font-size:11.5px;line-height:14px">6.93%</div>
<div class="a" style="left:526px;top:692px;width:54px;height:1px;background:#a0a0a0"></div>
<div class="v g navy" style="left:600px;top:697px;font-size:14.5px;line-height:19px;letter-spacing:.4px">不課税&amp; 値引</div>
<!-- subform nav -->
<div class="a" style="left:350px;top:719px;width:791px;height:16px;background:#f0f0f0"></div>
<div class="v g" style="left:355px;top:720px;font-size:12.5px;line-height:15px;color:#666;letter-spacing:-3.2px">レコード:</div>
<svg class="a" style="left:400px;top:721px" width="140" height="12"><path d="M2.5 2v8" stroke="#444" stroke-width="1.4"/><path d="M9 2v8L3.5 6z" fill="#444"/><path d="M25 2.5v7L20 6z" fill="#b0b0b0"/><path d="M89 2v8l5.500-4z" fill="#444"/><path d="M105 2v8l5-4z" fill="#444"/><path d="M111.500 2v8" stroke="#444" stroke-width="1.400"/><path d="M119 2v8l5-4z" fill="#444"/><path d="M127.500 2.500v7M124 6h7M125 3.500l5 5M130 3.500l-5 5" stroke="#f0a030" stroke-width="1"/></svg>
<div class="a wh g" style="left:430px;top:719px;width:49px;height:16px;border:1px solid #c8c8c8;border-bottom:0;font-size:13.5px;line-height:17px;padding-left:2px">1 / 2</div>
<div class="a" style="left:537px;top:719px;width:1px;height:16px;background:#d0d0d0"></div>
<svg class="a" style="left:547px;top:720px" width="18" height="15"><path d="M1 1h13l-5 6v7l-3-2.500v-4.500z" fill="none" stroke="#b8b8b8" stroke-width="1.200"/><path d="M10 10l4 4M14 10l-4 4" stroke="#c0c0c0" stroke-width="1.200"/></svg>
<div class="v g" style="left:565px;top:720px;font-size:12px;line-height:15px;color:#b4b4b4;letter-spacing:-3px">フィルターなし</div>
<div class="a" style="left:640px;top:719px;width:1px;height:16px;background:#d0d0d0"></div>
<div class="a wh g" style="left:645px;top:719px;width:70px;height:16px;border:1px solid #c8c8c8;border-bottom:0;font-size:12.500px;line-height:18px;padding-left:2px">検索</div>
<div class="a" style="left:742px;top:719px;width:1px;height:16px;background:#dcdcdc"></div>
<svg class="a" style="left:743px;top:719px" width="398" height="16"><path d="M11 4v8L5 8z" fill="#555"/><path d="M387 4v8l6-4z" fill="#555"/><rect x="17" y="4" width="181" height="8" rx="4" fill="#6e6e6e"/></svg>

</div>

<!--RIGHT-->
<div id="right">
<div class="a wh m" style="left:1168px;top:205px;width:107px;height:19px;border:1px solid #000;font-size:14px;line-height:15px;padding-left:2px">支払登録クエリ</div>
<div class="a" style="left:1168px;top:228px;width:518px;height:516px;background:#a5d5e2;border:1px solid #b4551e"></div>
<div class="a" style="left:1169px;top:229px;width:516px;height:37px;background:#c6d9f1"></div>
<div class="v g" style="left:1193px;top:228px;font-size:26.500px;line-height:36px;color:#595959;letter-spacing:.2px">支払登録</div>
<div class="a wh" style="left:1169px;top:266px;width:19px;height:464px;border:1px solid #000;border-left:0;border-bottom:0"></div>
<svg class="a" style="left:1176px;top:269px" width="8" height="11"><path d="M0.500 0.500 L6.500 5.500 L0.500 10.500 Z" fill="#444"/></svg>
<div class="a wh g" style="left:1206px;top:289px;width:91px;height:20px;border:1px solid #7f7f7f;font-size:15px;line-height:17px;color:#555;padding-left:2px;letter-spacing:0">支払登録ID</div>
<div class="a wh g r" style="left:1340px;top:289px;width:113px;height:20px;border:1px solid #b0b0b0;font-size:13.500px;line-height:18px;color:#444;padding:0 3px">2</div>
<div class="a wh g" style="left:1206px;top:315px;width:91px;height:20px;border:1px solid #7f7f7f;font-size:15px;line-height:17px;color:#555;padding-left:2px;letter-spacing:0">業者ID</div>
<div class="a wh g " style="left:1340px;top:315px;width:113px;height:20px;border:1px solid #b0b0b0;font-size:13.500px;line-height:18px;color:#444;padding:0 3px"></div>
<div class="dd" style="left:1435px;top:316px;width:17px;height:18px"></div>
<div class="a wh g" style="left:1206px;top:342px;width:91px;height:20px;border:1px solid #7f7f7f;font-size:15px;line-height:17px;color:#555;padding-left:2px;letter-spacing:0">社員ID</div>
<div class="a wh g " style="left:1340px;top:342px;width:113px;height:20px;border:1px solid #b0b0b0;font-size:13.500px;line-height:18px;color:#444;padding:0 3px"></div>
<div class="dd" style="left:1435px;top:343px;width:17px;height:18px"></div>
<div class="a wh g" style="left:1206px;top:368px;width:91px;height:19px;border:1px solid #7f7f7f;font-size:15px;line-height:16px;color:#555;padding-left:2px;letter-spacing:0">支払区分</div>
<div class="a wh g " style="left:1340px;top:368px;width:113px;height:19px;border:1px solid #b0b0b0;font-size:13.500px;line-height:17px;color:#444;padding:0 3px"></div>
<div class="dd" style="left:1435px;top:369px;width:17px;height:17px"></div>
<div class="a wh g" style="left:1206px;top:394px;width:91px;height:19px;border:1px solid #7f7f7f;font-size:15px;line-height:16px;color:#555;padding-left:2px;letter-spacing:0">支払金額</div>
<div class="a wh g " style="left:1340px;top:394px;width:113px;height:19px;border:1px solid #b0b0b0;font-size:13.500px;line-height:17px;color:#444;padding:0 3px"></div>
<div class="a wh g" style="left:1206px;top:417px;width:91px;height:19px;border:1px solid #7f7f7f;font-size:15px;line-height:16px;color:#555;padding-left:2px;letter-spacing:0">支払調整額</div>
<div class="a wh g " style="left:1340px;top:417px;width:113px;height:19px;border:1px solid #b0b0b0;font-size:13.500px;line-height:17px;color:#444;padding:0 3px"></div>
<div class="a wh g" style="left:1206px;top:444px;width:91px;height:19px;border:1px solid #7f7f7f;font-size:15px;line-height:16px;color:#555;padding-left:2px;letter-spacing:0">支払合計</div>
<div class="a wh g " style="left:1340px;top:444px;width:113px;height:19px;border:1px solid #b0b0b0;font-size:13.500px;line-height:17px;color:#444;padding:0 3px"></div>
<div class="a wh g" style="left:1206px;top:470px;width:91px;height:20px;border:1px solid #7f7f7f;font-size:15px;line-height:17px;color:#555;padding-left:2px;letter-spacing:0">品名:件名</div>
<div class="a wh g " style="left:1338px;top:470px;width:341px;height:20px;border:1px solid #b0b0b0;font-size:13.500px;line-height:18px;color:#444;padding:0 3px"></div>
<div class="a wh g" style="left:1206px;top:508px;width:117px;height:19px;border:1px solid #7f7f7f;font-size:15px;line-height:16px;color:#555;padding-left:2px;letter-spacing:0">参考入金金額</div>
<div class="a wh g " style="left:1338px;top:508px;width:115px;height:19px;border:1px solid #b0b0b0;font-size:13.500px;line-height:17px;color:#444;padding:0 3px"></div>
<div class="a wh g" style="left:1463px;top:285px;width:91px;height:19px;border:1px solid #7f7f7f;font-size:15px;line-height:16px;color:#555;padding-left:2px;letter-spacing:0">支払入金日</div>
<div class="a wh g " style="left:1561px;top:285px;width:113px;height:19px;border:1px solid #b0b0b0;font-size:13.500px;line-height:17px;color:#444;padding:0 3px"></div>
<div class="a wh g" style="left:1463px;top:315px;width:91px;height:20px;border:1px solid #7f7f7f;font-size:15px;line-height:17px;color:#555;padding-left:2px;letter-spacing:0;word-spacing:5px">購買要求 ID</div>
<div class="a wh g c" style="left:1561px;top:315px;width:113px;height:20px;border:1px solid #b0b0b0;font-size:13.500px;line-height:18px;color:#444;padding:0 3px">A250601-40</div>
<div class="a wh g" style="left:1463px;top:342px;width:91px;height:19px;border:1px solid #7f7f7f;font-size:15px;line-height:16px;color:#555;padding-left:2px;letter-spacing:0">備考</div>
<div class="a wh g " style="left:1489px;top:372px;width:190px;height:84px;border:1px solid #b0b0b0;font-size:13.500px;line-height:82px;color:#444;padding:0 3px"></div>
<div class="v g b" style="left:1199px;top:536px;font-size:12px;line-height:16px;color:#ff0000;letter-spacing:.2px">※エラーメッセージ出ますが続行　銀行のcsvリンクテーブルExcelで検討中</div>
<!-- right nav -->
<div class="a" style="left:1169px;top:729px;width:516px;height:12px;background:#f0f0f0"></div>
<div class="v g" style="left:1174px;top:731px;font-size:12.500px;line-height:15px;color:#666;letter-spacing:-3.200px">レコード:</div>
<svg class="a" style="left:1219px;top:732px" width="140" height="10"><path d="M2.500 2v8" stroke="#444" stroke-width="1.400"/><path d="M9 2v8L3.500 6z" fill="#444"/><path d="M25 2.500v7L20 6z" fill="#b0b0b0"/><path d="M89 2v8l5.500-4z" fill="#b0b0b0"/><path d="M105 2v8l5-4z" fill="#444"/><path d="M111.500 2v8" stroke="#444" stroke-width="1.400"/><path d="M119 2v8l5-4z" fill="#b0b0b0"/><path d="M127.500 2.500v7M124 6h7M125 3.500l5 5M130 3.500l-5 5" stroke="#f5d9a0" stroke-width="1"/></svg>
<div class="a wh g" style="left:1249px;top:730px;width:49px;height:12px;border:1px solid #c8c8c8;border-bottom:0;font-size:13.500px;line-height:17px;padding-left:2px">1 / 1</div>
<div class="a" style="left:1356px;top:729px;width:1px;height:12px;background:#d0d0d0"></div>
<svg class="a" style="left:1366px;top:731px" width="18" height="10"><path d="M1 1h13l-5 6v7l-3-2.500v-4.500z" fill="none" stroke="#b8b8b8" stroke-width="1.200"/></svg>
<div class="v g" style="left:1384px;top:731px;font-size:12px;line-height:15px;color:#b4b4b4;letter-spacing:-3px">フィルターなし</div>
<div class="a" style="left:1459px;top:729px;width:1px;height:12px;background:#d0d0d0"></div>
<div class="a wh g" style="left:1464px;top:730px;width:70px;height:12px;border:1px solid #c8c8c8;border-bottom:0;font-size:12.500px;line-height:18px;padding-left:2px">検索</div>
<div class="a" style="left:1561px;top:729px;width:1px;height:12px;background:#dcdcdc"></div>
<svg class="a" style="left:1562px;top:729px" width="123" height="12"><path d="M11 5v8L5 9z" fill="#555"/><path d="M112 5v8l6-4z" fill="#555"/><rect x="17" y="5" width="84" height="8" rx="4" fill="#6e6e6e"/></svg>
</div>

<!--FOOT-->
<div id="foot">
<div class="a" style="left:0;top:741px;width:1726px;height:71px;background:#558ed5;border-top:1px solid #000"></div>
<div class="a" style="left:0;top:812px;width:1726px;height:12px;background:#f0f0f0"></div>
<div class="a btn" style="left:38px;top:752px;width:38px;height:36px"><svg width="35" height="33" style="display:block"><path d="M14.500 11.500v10" stroke="#00008b" stroke-width="2"/><path d="M22 11.500v10l-6-5z" fill="#0000ff"/></svg></div>
<div class="a btn" style="left:76px;top:752px;width:39px;height:36px"><svg width="36" height="33" style="display:block"><path d="M20.500 11.500v10l-6-5z" fill="#0000ff"/></svg></div>
<div class="a btn" style="left:115px;top:752px;width:38px;height:36px"><svg width="35" height="33" style="display:block"><path d="M15.500 11.500v10l6-5z" fill="#0000ff"/></svg></div>
<div class="a btn" style="left:153px;top:752px;width:39px;height:36px"><svg width="36" height="33" style="display:block"><path d="M14.500 11.500v10l6-5z" fill="#0000ff"/><path d="M22 11.500v10" stroke="#00008b" stroke-width="2"/></svg></div>
<div class="a btn m" style="left:192px;top:752px;width:40px;height:36px;font-size:15px;line-height:33px;color:#993300;padding-left:19px">新</div>
<svg class="a" style="left:199px;top:763px" width="8" height="12"><path d="M1 1v10l6-5z" fill="#0000ff"/></svg>
<div class="a btn m c" style="left:332px;top:752px;width:50px;height:39px;font-size:12.5px;line-height:12px;color:#993300;padding-top:6px;letter-spacing:.3px">発注書<br>12項目</div>
<div class="a btn m c" style="left:382px;top:752px;width:39px;height:39px;font-size:12.5px;line-height:14px;color:#993300;padding-top:4px;">検収</div>
<div class="a btn m c" style="left:421px;top:752px;width:38px;height:39px;font-size:12.5px;line-height:14px;color:#993300;padding-top:4px;">受領</div>
<div class="a btn m c" style="left:459px;top:752px;width:40px;height:39px;font-size:12px;line-height:11.5px;color:#993300;padding-top:2px;letter-spacing:2px;">レポ<br>ート<br>印刷</div>
<div class="a btn m c" style="left:503px;top:752px;width:98px;height:38px;font-size:14px;line-height:14.5px;color:#0000ff;padding-top:3px;letter-spacing:1.5px;">区分別<br><span style="letter-spacing:0">商品</span><span style="letter-spacing:-2.5px">リスト</span></div>
<div class="a btn m c" style="left:600px;top:752px;width:96px;height:38px;font-size:14px;line-height:14.5px;color:#993300;padding-top:3px;letter-spacing:1.5px;">商品在庫数<br>確認</div>
<div class="a btn m c" style="left:703px;top:752px;width:45px;height:39px;font-size:13.5px;line-height:13.5px;color:#993300;padding-top:5px;">AB*<br>複写</div>
<div class="a btn m c" style="left:747px;top:752px;width:48px;height:39px;font-size:12.5px;line-height:14px;color:#993300;padding-top:4px;">更新</div>
<svg class="a" style="left:395px;top:772px" width="13" height="13"><rect x="2" y="1" width="9" height="11" rx="1" fill="#0b7f7f" stroke="#111" stroke-width="1"/><rect x="4.500" y="3" width="4.500" height="3" fill="#cfe"/><path d="M1 2.500h2M1 4.500h2M1 6.500h2M1 8.500h2M1 10.500h2" stroke="#111" stroke-width=".8"/></svg>
<svg class="a" style="left:434px;top:772px" width="13" height="13"><rect x="2" y="1" width="9" height="11" rx="1" fill="#0b7f7f" stroke="#111" stroke-width="1"/><rect x="4.500" y="3" width="4.500" height="3" fill="#cfe"/><path d="M1 2.500h2M1 4.500h2M1 6.500h2M1 8.500h2M1 10.500h2" stroke="#111" stroke-width=".8"/></svg>
<svg class="a" style="left:763px;top:772px" width="18" height="12"><path d="M2 9.500l5-6 2.500 1.500-4.500 6z" fill="#222"/><path d="M6.500 3.500l1.500-2 2 1.300-1.500 2z" fill="#e8d820"/><path d="M13.500 1.500v6M13.500 9v2" stroke="#111" stroke-width="2.200"/><path d="M0.500 8.500h1M0.500 10.500h1M2.500 10.500h1" stroke="#333" stroke-width="1"/></svg>
<div class="v m" style="left:806px;top:748px;font-size:12px;line-height:15px;color:#fff;letter-spacing:0px">重複回避用　1.AB複写ボタンクリック　　　メインフォームA&nbsp; B******-50</div>
<div class="v m" style="left:815px;top:760px;font-size:12px;line-height:15px;color:#fff;letter-spacing:0px">2.明細　商品を選択して、test複写ボタンクリック　購買要求番号50になり複写します　商品選択繰り返し後</div>
<div class="v m" style="left:815px;top:772px;font-size:12px;line-height:15px;color:#fff;letter-spacing:-.6px">3.更新ボタンクリック</div>
<div class="v m" style="left:833px;top:784px;font-size:12px;line-height:15px;color:#fff;letter-spacing:0px">複写後　訂正入力時　資産減Bフォーム　資産増Aフォーム　入力規則にしています</div>
<div class="v m" style="left:833px;top:796px;font-size:12px;line-height:15px;color:#fff;letter-spacing:-.6px">購買要求番号Wクリックして訂正してください</div>
<div class="a btn m c" style="left:1439px;top:751px;width:63px;height:37px;font-size:14px;line-height:15px;color:#993300;padding-top:2px"><span style="letter-spacing:-1px">レコード</span><br>の削除</div>
<div class="v m" style="left:1521px;top:750px;font-size:14px;line-height:18px;color:#ffff00;letter-spacing:.4px">受注コード:</div>
<div class="a wh br g r" style="left:1519px;top:771px;width:75px;height:17px;font-size:13px;line-height:15px;padding-right:2px">14</div>
<!-- bottom bar -->
<div class="v g" style="left:6px;top:814px;font-size:12.500px;line-height:15px;color:#555;letter-spacing:-3.200px">レコード:</div>
<svg class="a" style="left:51px;top:815px" width="140" height="10"><path d="M2.500 2v8" stroke="#444" stroke-width="1.400"/><path d="M9 2v8L3.500 6z" fill="#444"/><path d="M25 2.500v7L20 6z" fill="#b0b0b0"/><path d="M88 2v8l5.500-4z" fill="#444"/><path d="M104 2v8l5-4z" fill="#444"/><path d="M110.500 2v8" stroke="#444" stroke-width="1.400"/><path d="M119 2v8l5-4z" fill="#444"/><path d="M127.500 2.500v7M124 6h7M125 3.500l5 5M130 3.500l-5 5" stroke="#f0a030" stroke-width="1"/></svg>
<div class="a wh g" style="left:80px;top:813px;width:51px;height:11px;border:1px solid #c8c8c8;border-bottom:0;font-size:13.500px;line-height:19px;padding-left:2px">1 / 8</div>
<div class="a" style="left:188px;top:812px;width:1px;height:12px;background:#d0d0d0"></div>
<svg class="a" style="left:198px;top:814px" width="18" height="11"><path d="M1 1h13l-5 6v7l-3-2.500v-4.500z" fill="none" stroke="#444" stroke-width="1.200"/></svg>
<div class="v g" style="left:217px;top:815px;font-size:12px;line-height:15px;color:#2a3f6a;letter-spacing:-2.400px">フィルター処理なし</div>
<div class="a" style="left:315px;top:812px;width:1px;height:12px;background:#d0d0d0"></div>
<div class="a wh g" style="left:321px;top:813px;width:70px;height:11px;border:1px solid #c8c8c8;border-bottom:0;font-size:12.500px;line-height:18px;padding-left:2px">検索</div>
<div class="a" style="left:417px;top:812px;width:1px;height:12px;background:#dcdcdc"></div>
<svg class="a" style="left:418px;top:812px" width="1308" height="12"><path d="M11 6v8L5 10z" fill="#6a6a6a"/><rect x="16" y="5" width="1234" height="10" rx="5" fill="#767676"/></svg>
</div>

</body>
</html>
